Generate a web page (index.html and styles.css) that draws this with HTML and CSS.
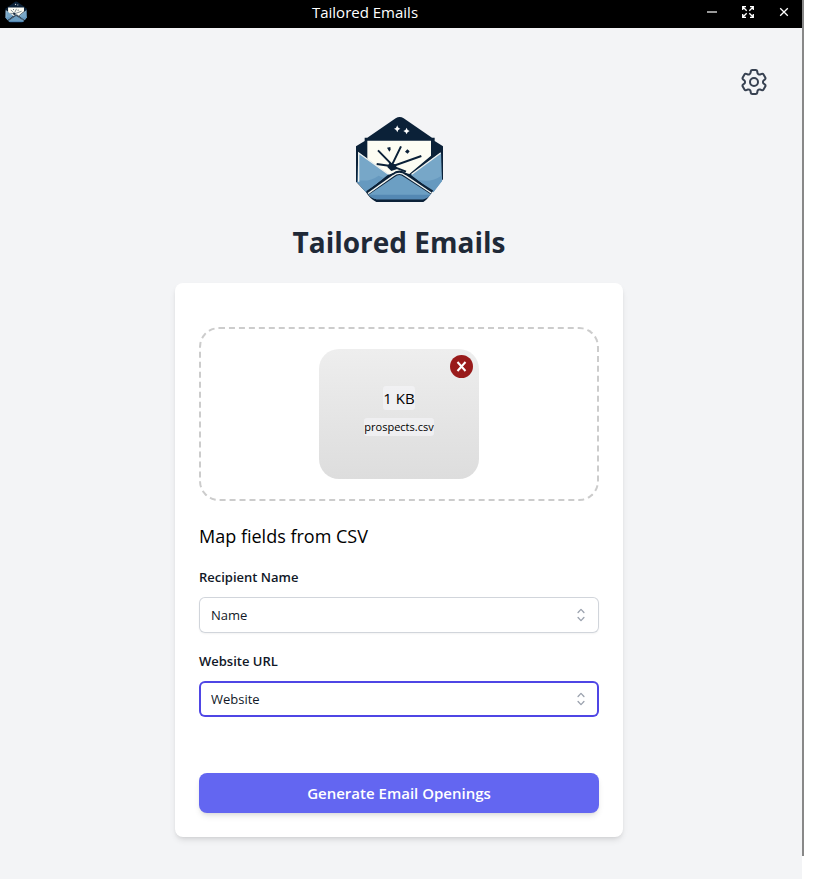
FILE: index.html
```
<!doctype html>
<html lang="en">
	<head>
		<meta charset="utf-8">
		<meta name="viewport" content="width=device-width, initial-scale=1">
		<title>Tailored Emails</title>
		<link rel="stylesheet" href="styles.css">
	</head>
	<body>
		<div class="app">
			<header class="titlebar">
				<svg class="titlebar-icon" viewBox="33 33 264 258" aria-hidden="true"><use href="#envelope"/></svg>
				<div class="titlebar-text">Tailored Emails</div>
				<button class="window-button" type="button" aria-label="Minimize">
					<svg width="12" height="12" viewBox="0 0 12 12"><path d="M1 6h10" stroke="#999" stroke-width="2"/></svg>
				</button>
				<button class="window-button" type="button" aria-label="Fullscreen">
					<svg width="12" height="12" viewBox="0 0 12 12" fill="none" stroke="#fff" stroke-width="1.3"><path d="M.7 4V.7H4M.7.7l4 4M8 .7h3.3V4M11.3.7l-4 4M.7 8v3.3H4M.7 11.3l4-4M8 11.3h3.3V8M11.3 11.3l-4-4"/></svg>
				</button>
				<button class="window-button" type="button" aria-label="Close">
					<svg width="12" height="12" viewBox="0 0 12 12"><path d="M2.2 2.2l7.6 7.6M9.8 2.2L2.2 9.8" stroke="#fff" stroke-width="1.3"/></svg>
				</button>
			</header>
			<main class="page">
				<div class="toolbar">
					<button class="settings" type="button" aria-label="Settings">
						<svg width="32" height="32" viewBox="0 0 24 24" fill="none" stroke="currentColor" stroke-width="1.5" stroke-linecap="round" stroke-linejoin="round">
							<path d="M9.594 3.94c.09-.542.56-.94 1.11-.94h2.593c.55 0 1.02.398 1.11.94l.213 1.281c.063.374.313.686.645.87.074.04.147.083.22.127.325.196.72.257 1.075.124l1.217-.456a1.125 1.125 0 0 1 1.37.49l1.296 2.247a1.125 1.125 0 0 1-.26 1.431l-1.003.827c-.293.241-.438.613-.43.992a7.723 7.723 0 0 1 0 .255c-.008.378.137.75.43.991l1.004.827c.424.35.534.955.26 1.43l-1.298 2.247a1.125 1.125 0 0 1-1.369.491l-1.217-.456c-.355-.133-.75-.072-1.076.124a6.47 6.47 0 0 1-.22.128c-.331.183-.581.495-.644.869l-.213 1.281c-.09.543-.56.94-1.11.94h-2.594c-.55 0-1.019-.398-1.11-.94l-.213-1.281c-.062-.374-.312-.686-.644-.87a6.52 6.52 0 0 1-.22-.127c-.325-.196-.72-.257-1.076-.124l-1.217.456a1.125 1.125 0 0 1-1.369-.49l-1.297-2.247a1.125 1.125 0 0 1 .26-1.431l1.004-.827c.292-.24.437-.613.43-.991a6.932 6.932 0 0 1 0-.255c.007-.38-.138-.751-.43-.992l-1.004-.827a1.125 1.125 0 0 1-.26-1.43l1.297-2.247a1.125 1.125 0 0 1 1.37-.491l1.216.456c.356.133.751.072 1.076-.124.072-.044.146-.086.22-.128.332-.183.582-.495.644-.869l.214-1.28Z"/>
							<path d="M15 12a3 3 0 1 1-6 0 3 3 0 0 1 6 0Z"/>
						</svg>
					</button>
				</div>
				<div class="content">
					<svg class="logo" viewBox="33 33 264 258" role="img" aria-label="Tailored Emails logo">
						<g id="envelope">
							<path d="M36 124L62 108V98H70L155 40Q167 32 179 40L264 98H272V108L298 124V222L262 262Q252 284 238 291H97Q78 282 66 262L36 230Z" fill="#0b2138"/>
							<path d="M70 107H261V152L196 207L166 198L134 209L70 164Z" fill="#fdfdf3"/>
							<path d="M43 142L134 208L66 262L40 232Z" fill="#77a7c8"/>
							<path d="M42 225Q75 232 104 212L118 218L66 262L40 232Z" fill="#6699bf"/>
							<path d="M291 142L200 209L268 262L294 228Z" fill="#77a7c8"/>
							<path d="M292 212Q262 234 222 224L268 262L294 228Z" fill="#6699bf"/>
							<path d="M72 268L148 215Q166 199 184 215L262 266Q252 279 238 283H97Q82 280 72 268Z" fill="#6c9fc3"/>
							<path d="M74 269H260Q250 280 238 283H97Q84 280 74 269Z" fill="#5488b3"/>
							<path d="M70 264L148 211Q166 196 184 211L264 262" fill="none" stroke="#0b2138" stroke-width="13"/>
							<path d="M44 230V144L132 207M290 144L203 208M72 266L148 212Q166 198 184 212L262 264" fill="none" stroke="#eef1ee" stroke-width="4"/>
							<path d="M102 136L143 178M171 124L140 188M232 153L145 184L186 200M145 184L98 177" fill="none" stroke="#0b2138" stroke-width="6"/>
							<path d="M136 174L154 178L160 192L142 198L130 186Z" fill="#0b2138"/>
							<path d="M129 128L139 126L140 134L136 140ZM190 133L197 139L191 146L183 140Z" fill="#0b2138"/>
							<path d="M160 61Q161 70 169 71Q161 73 160 82Q158 73 150 71Q158 70 160 61ZM188 68Q189 76 197 78Q189 80 188 88Q186 80 178 78Q186 76 188 68Z" fill="#fff"/>
						</g>
					</svg>
					<h1>Tailored Emails</h1>
					<form class="card">
						<div class="dropzone">
							<div class="file">
								<span class="file-size">1 KB</span>
								<span class="file-name">prospects.csv</span>
								<button class="file-remove" type="button" aria-label="Remove file">
									<svg width="11" height="11" viewBox="0 0 11 11"><path d="M1.5 1l8 9M9.5 1l-8 9" stroke="#fff" stroke-width="2"/></svg>
								</button>
							</div>
						</div>
						<h2>Map fields from CSV</h2>
						<div class="field">
							<label for="recipient">Recipient Name</label>
							<div class="select">
								<select id="recipient">
									<option>Name</option>
								</select>
								<svg viewBox="0 0 20 20" fill="currentColor" aria-hidden="true"><path id="chevrons" d="M10 3a.75.75 0 01.55.24l3.25 3.5a.75.75 0 11-1.1 1.02L10 4.852 7.3 7.76a.75.75 0 01-1.1-1.02l3.25-3.5A.75.75 0 0110 3zm-3.76 9.2a.75.75 0 011.06.04l2.7 2.908 2.7-2.908a.75.75 0 111.1 1.02l-3.25 3.5a.75.75 0 01-1.1 0l-3.25-3.5a.75.75 0 01.04-1.06z"/></svg>
							</div>
						</div>
						<div class="field">
							<label for="website">Website URL</label>
							<div class="select active">
								<select id="website">
									<option>Website</option>
								</select>
								<svg viewBox="0 0 20 20" fill="currentColor" aria-hidden="true"><use href="#chevrons"/></svg>
							</div>
						</div>
						<button class="submit" type="button">Generate Email Openings</button>
					</form>
				</div>
			</main>
		</div>
		<div class="scroll-edge"></div>
	</body>
</html>
```

FILE: styles.css
```
* {
	box-sizing: border-box;
}
body {
	margin: 0;
	padding-right: 21px;
	min-height: 100vh;
	display: flex;
	background-color: #fff;
	color: #000;
	font-family: "Open Sans", "Noto Sans", sans-serif;
	font-size: 15px;
	line-height: 24px;
}
button {
	border: 0;
	padding: 0;
	font: inherit;
	background: none;
	cursor: pointer;
}
svg {
	display: block;
}
h1, h2 {
	margin: 0;
}
.app {
	flex: 1;
	display: flex;
	flex-direction: column;
	background-color: #f3f4f6;
}
.scroll-edge {
	width: 2px;
	margin-bottom: 23px;
	background-color: #888;
}

/* window frame */
.titlebar {
	display: flex;
	align-items: center;
	height: 28px;
	padding-bottom: 4px;
	background-color: #000;
	color: #fff;
}
.titlebar-icon {
	width: 22px;
	height: 22px;
	margin: 0 9px 0 5px;
}
.titlebar-text {
	flex: 1;
	text-align: center;
}
.window-button {
	display: flex;
	align-items: center;
	justify-content: center;
	width: 36px;
	height: 24px;
}

.page {
	flex: 1;
	padding-bottom: 24px;
}
.toolbar {
	display: flex;
	justify-content: flex-end;
	padding: 38px 32px 18px;
}
.settings {
	color: #374151;
}
.content {
	display: flex;
	flex-direction: column;
	align-items: center;
	padding: 0 4px 0 0;
}
.logo {
	width: 88px;
	height: 86px;
}
h1 {
	margin: 22px 0 23px;
	color: #1f2937;
	font-size: 28px;
	font-weight: 700;
	line-height: 36px;
}

.card {
	width: 100%;
	max-width: 448px;
	padding: 44px 24px 24px;
	background-color: #fff;
	border-radius: 8px;
	box-shadow:
		0 4px 6px -1px rgba(0, 0, 0, 0.1),
		0 2px 4px -2px rgba(0, 0, 0, 0.1);
}
.dropzone {
	display: flex;
	justify-content: center;
	padding: 20px;
	border: 2px dashed #ccc;
	border-radius: 20px;
}
.file {
	position: relative;
	display: flex;
	flex-direction: column;
	align-items: center;
	gap: 8px;
	width: 160px;
	height: 130px;
	padding-top: 37px;
	background: linear-gradient(#eee, #ddd);
	border-radius: 20px;
}
.file-size, .file-name {
	border-radius: 3px;
	background-color: rgba(243, 244, 246, 0.7);
}
.file-name {
	font-size: 11px;
	line-height: 18px;
}
.file-remove {
	position: absolute;
	top: 6px;
	right: 6px;
	display: flex;
	align-items: center;
	justify-content: center;
	width: 23px;
	height: 23px;
	background-color: #991b1b;
	border-radius: 50%;
}

h2 {
	margin: 21px 0 17px;
	font-size: 18px;
	font-weight: 500;
	line-height: 28px;
}
.field {
	margin-bottom: 18px;
}
label {
	display: block;
	margin-bottom: 10px;
	color: #111827;
	font-size: 13px;
	font-weight: 600;
	line-height: 20px;
}
.select {
	position: relative;
}
.select select {
	display: block;
	width: 100%;
	height: 36px;
	padding: 0 40px 0 12px;
	appearance: none;
	border: 0;
	border-radius: 6px;
	background-color: #fff;
	box-shadow:
		inset 0 0 0 1px #d1d5db,
		0 1px 2px rgba(0, 0, 0, 0.05);
	color: #111827;
	font: inherit;
	font-size: 13px;
}
.select.active select {
	box-shadow: inset 0 0 0 2px #4f46e5;
}
.select svg {
	position: absolute;
	top: 9px;
	right: 9px;
	width: 18px;
	height: 18px;
	color: #9ca3af;
	pointer-events: none;
}
.submit {
	width: 100%;
	height: 40px;
	margin-top: 38px;
	border-radius: 8px;
	background-color: #6366f1;
	box-shadow:
		0 4px 6px -1px rgba(0, 0, 0, 0.1),
		0 2px 4px -2px rgba(0, 0, 0, 0.1);
	color: #fff;
	font-weight: 600;
}
```
